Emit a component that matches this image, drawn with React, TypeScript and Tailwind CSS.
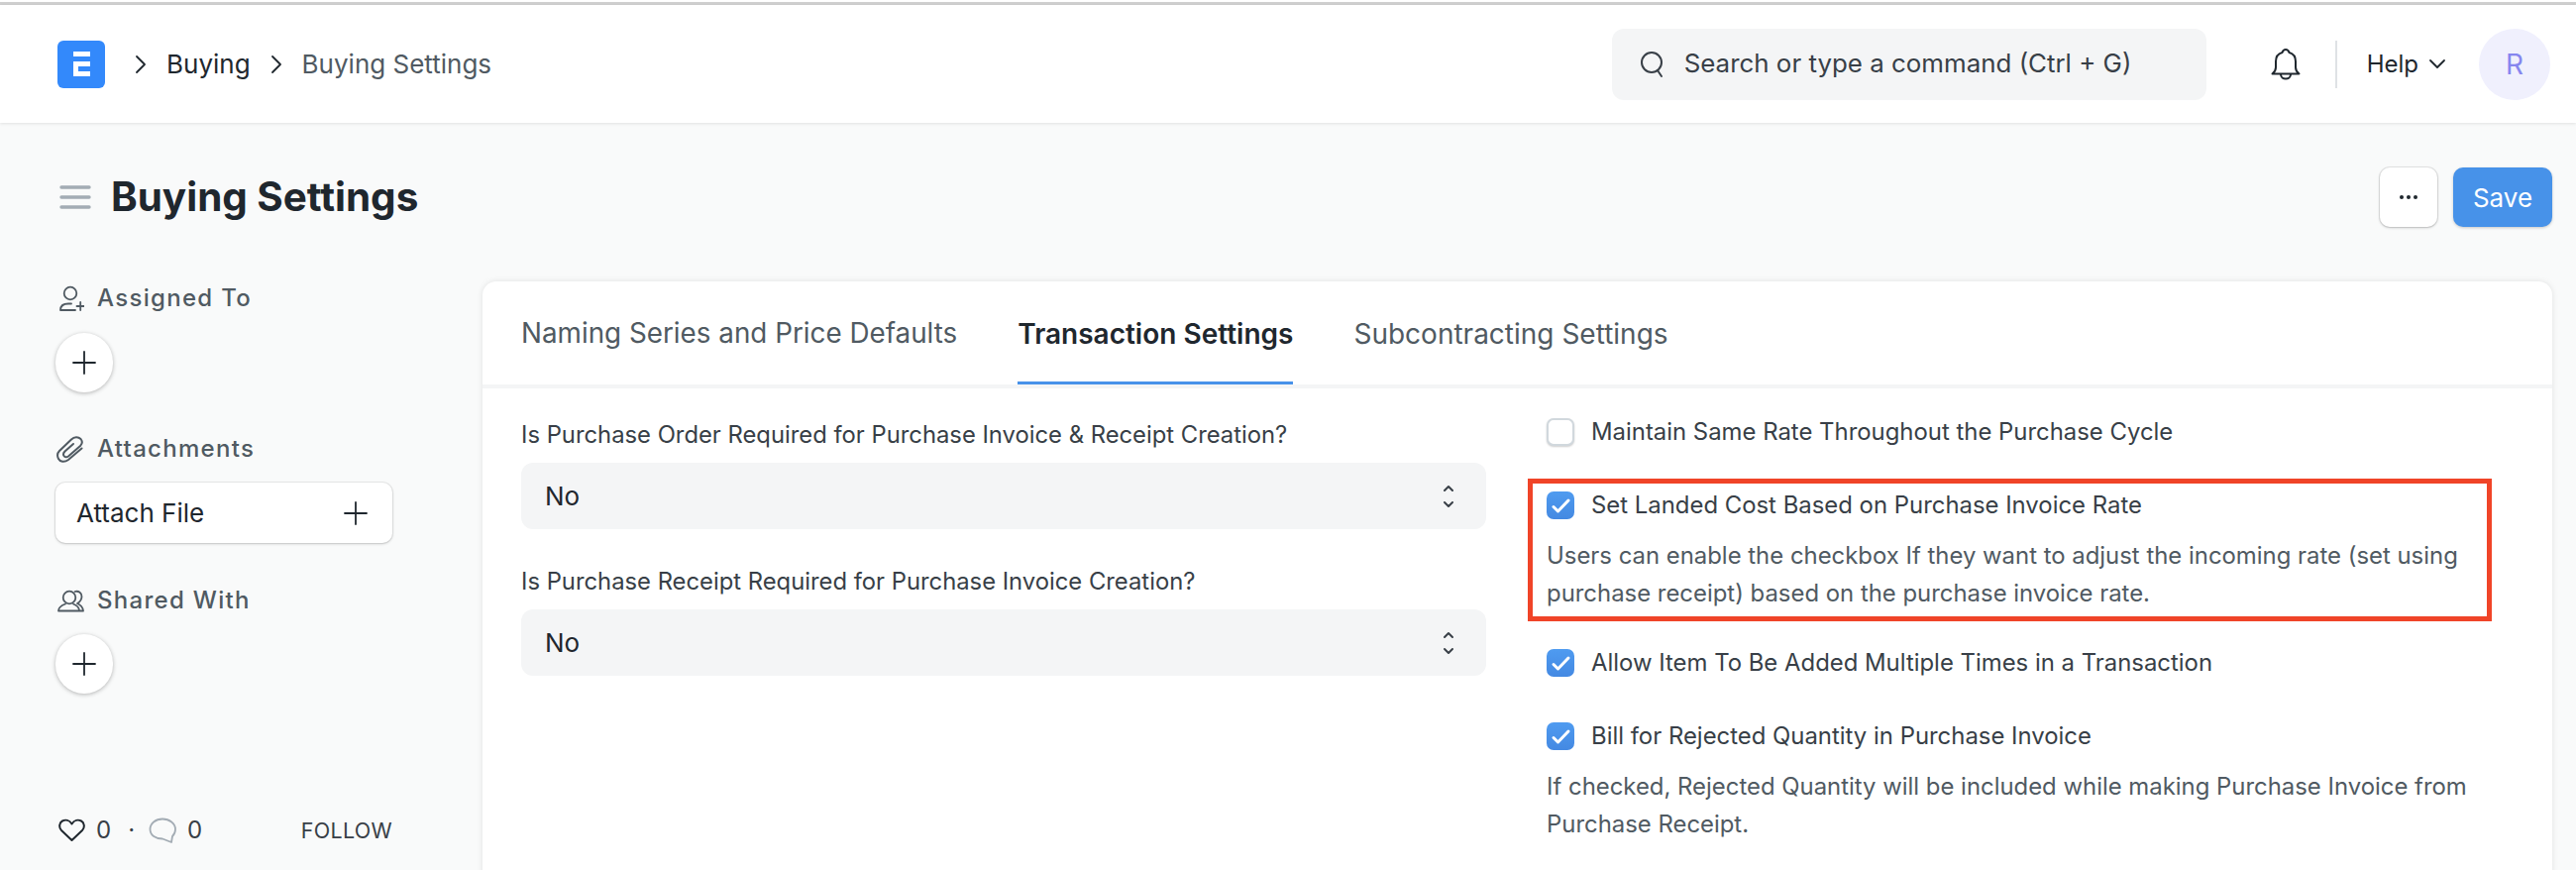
import React from "react";

const Plus = ({ s = 24 }: { s?: number }) => (
  <svg width={s} height={s} viewBox="0 0 24 24" fill="none" stroke="#1f272e" strokeWidth="1.8" strokeLinecap="round">
    <path d="M12 1v22M1 12h22" />
  </svg>
);

const Check = ({ on }: { on: boolean }) =>
  on ? (
    <span className="flex h-[28px] w-[28px] shrink-0 items-center justify-center rounded-[7px] bg-gradient-to-b from-[#4f9bf0] to-[#4489e2]">
      <svg width="28" height="28" viewBox="0 0 28 28" fill="none" stroke="#fff" strokeWidth="3" strokeLinecap="round" strokeLinejoin="round">
        <path d="M7 15.500L11.500 20 22 9" />
      </svg>
    </span>
  ) : (
    <span className="h-[28px] w-[28px] shrink-0 rounded-[7px] border-2 border-[#d1d8dd] bg-white shadow-[0_1px_2px_rgba(0,0,0,0.2)]" />
  );

const CheckRow = ({ on, label }: { on: boolean; label: string }) => (
  <div className="flex h-[28px] items-center gap-[17px] text-[23.900px] text-[#383f47]">
    <Check on={on} />
    <span>{label}</span>
  </div>
);

const Select = () => (
  <div className="flex h-[67px] items-center justify-between rounded-[12px] bg-[#f4f5f6] pl-[24px] pr-[30px] text-[26px] text-[#1f272e]">
    <span>No</span>
    <svg width="16" height="28" viewBox="0 0 16 28" fill="none" stroke="#383f47" strokeWidth="2" strokeLinecap="round" strokeLinejoin="round">
      <path d="M4 8l4-4 4 4M4 20l4 4 4-4" />
    </svg>
  </div>
);

const SideLabel = ({ icon, children }: { icon: React.ReactNode; children: React.ReactNode }) => (
  <div className="flex h-[30px] items-center gap-[13px] text-[24px] font-medium tracking-[1.300px] text-[#505a62]">
    <span className="flex w-[29px] justify-center">{icon}</span>
    {children}
  </div>
);

const Round = () => (
  <div className="flex h-[60px] w-[58px] items-center justify-center rounded-full bg-white shadow-[0_1px_4px_rgba(0,0,0,0.28)]">
    <Plus />
  </div>
);

export default function App() {
  return (
    <div className="h-[878px] w-[2600px] overflow-hidden bg-[#f9fafa] font-['Inter',sans-serif]">
      <div className="h-[2px] bg-white" />
      <div className="h-[3px] bg-[#cfcfcf]" />
      <header className="flex h-[119px] items-center bg-white pl-[58px] pr-[26px] shadow-[0_1px_3px_rgba(0,0,0,0.1)]">
        <div className="flex h-[48px] w-[48px] items-center justify-center rounded-[6px] bg-[#3389fb]">
          <svg width="17" height="25" viewBox="0 0 17 25" fill="#fff">
            <path d="M0 0h17v5H0zM0 10h17v5H5v5h12v5H0z" />
          </svg>
        </div>
        <svg className="ml-[30px]" width="12" height="20" viewBox="0 0 12 20" fill="none" stroke="#1f272e" strokeWidth="1.8" strokeLinecap="round" strokeLinejoin="round">
          <path d="M2 2l8 8-8 8" />
        </svg>
        <span className="ml-[20px] text-[26px] text-[#1f272e]">Buying</span>
        <svg className="ml-[20px]" width="12" height="20" viewBox="0 0 12 20" fill="none" stroke="#1f272e" strokeWidth="1.8" strokeLinecap="round" strokeLinejoin="round">
          <path d="M2 2l8 8-8 8" />
        </svg>
        <span className="ml-[20px] text-[26px] text-[#505a62]">Buying Settings</span>
        <div className="ml-auto flex h-[72px] w-[600px] items-center gap-[19px] rounded-[12px] bg-[#f4f5f6] pl-[28px] text-[25.900px] text-[#383f47]">
          <svg width="26" height="28" viewBox="0 0 26 28" fill="none" stroke="#383f47" strokeWidth="2" strokeLinecap="round">
            <circle cx="12" cy="12" r="10" />
            <path d="M18 20l4 6" />
          </svg>
          <span>Search or type a command (Ctrl + G)</span>
        </div>
        <svg className="ml-[65px]" width="30" height="34" viewBox="0 0 30 34" fill="none" stroke="#1f272e" strokeWidth="2" strokeLinejoin="round">
          <path d="M1.500 26.500C4 24.500 5 23 5 20V14C5 9 8 6 11.500 5 12 3.500 13 2 15 2 17 2 18 3.500 18.500 5 22 6 25 9 25 14V20C25 23 26 24.500 28.500 26.500H1.500Z" />
          <path d="M10 27C10 33 20 33 20 27" />
        </svg>
        <div className="ml-[35px] h-[48px] w-[2px] bg-[#dfe2e5]" />
        <span className="ml-[30px] text-[24px] text-[#1f272e]">Help</span>
        <svg className="ml-[10px]" width="18" height="12" viewBox="0 0 18 12" fill="none" stroke="#1f272e" strokeWidth="1.8" strokeLinecap="round" strokeLinejoin="round">
          <path d="M2 2l7 7 7-7" />
        </svg>
        <div className="ml-[33px] flex h-[72px] w-[72px] items-center justify-center rounded-full bg-[#f0f0fd] text-[28px] text-[#8686ef]">R</div>
      </header>

      <div className="flex h-[160px] items-center pb-[10px] pl-[60px] pr-[24px]">
        <svg width="32" height="28" viewBox="0 0 32 28" fill="none" stroke="#a3acb4" strokeWidth="3.400" strokeLinecap="round">
          <path d="M2 4h28M2 14h28M2 24h28" />
        </svg>
        <h1 className="ml-[20px] text-[40.400px] font-bold text-[#1f272e]">Buying Settings</h1>
        <div className="ml-auto flex h-[60px] w-[58px] items-center justify-center rounded-[10px] bg-white text-[#1f272e] shadow-[0_0_0_1px_rgba(0,0,0,0.08),0_1px_3px_rgba(0,0,0,0.2)]">
          <svg width="20" height="6" viewBox="0 0 20 6" fill="#1f272e">
            <circle cx="3" cy="3" r="2" />
            <circle cx="10" cy="3" r="2" />
            <circle cx="17" cy="3" r="2" />
          </svg>
        </div>
        <div className="ml-[16px] flex h-[60px] w-[100px] items-center justify-center rounded-[10px] bg-[#4792e9] text-[26px] text-white shadow-[0_1px_3px_rgba(0,0,0,0.2)]">Save</div>
      </div>

      <div className="flex pl-[56px]">
        <aside className="flex h-[594px] w-[431px] shrink-0 flex-col pt-[2px]">
          <SideLabel icon={
            <svg width="28" height="26" viewBox="0 0 28 26" fill="none" stroke="#505a62" strokeWidth="1.800" strokeLinecap="round">
              <circle cx="14" cy="8" r="6.300" />
              <path d="M4 25c0-4 3-6.500 8-6.500h3M4 25h15M20.500 21h7.500M24.200 17v8" />
            </svg>
          }>Assigned To</SideLabel>
          <div className="mt-[20px]"><Round /></div>
          <div className="mt-[42px]">
            <SideLabel icon={
              <svg width="27" height="27" viewBox="0 0 27 27" fill="none" stroke="#505a62" strokeWidth="2" strokeLinecap="round">
                <path d="M25.500 12.500L12 24C8 27 3.500 26 2 23 .5 20 1 17 3 15L15 3.500C18 .5 22 .5 24.500 3 26.500 5.500 26 8 24 10L12 20.500C10.500 21.500 8.500 21.500 7.500 20 6.500 18.500 7 17 8.500 15.500L17 8" />
              </svg>
            }>Attachments</SideLabel>
          </div>
          <div className="mt-[19px] flex h-[61px] w-[340px] items-center justify-between rounded-[10px] bg-white pl-[21px] pr-[25px] text-[26px] text-[#1f272e] shadow-[0_0_0_1px_rgba(0,0,0,0.06),0_1px_3px_rgba(0,0,0,0.18)]">
            <span>Attach File</span>
            <Plus />
          </div>
          <div className="mt-[43px]">
            <SideLabel icon={
              <svg width="29" height="24" viewBox="0 0 29 24" fill="none" stroke="#505a62" strokeWidth="1.800" strokeLinecap="round" strokeLinejoin="round">
                <circle cx="14" cy="9" r="6.300" />
                <path d="M10 15.500C6 17 3 19 3 22.500H24C24 19 22 17 18 15.500M19.500 3C23.500 2 26.500 4.500 26.500 8 26.500 11 24.500 13.500 22 15 24.500 16 27.500 18 28 22.500H24" />
              </svg>
            }>Shared With</SideLabel>
          </div>
          <div className="mt-[19px]"><Round /></div>
          <div className="mt-[123px] flex h-[30px] w-[340px] items-center text-[24px] text-[#383f47]">
            <svg className="ml-[3px]" width="27" height="24" viewBox="0 0 27 24" fill="none" stroke="#1f272e" strokeWidth="2" strokeLinejoin="round">
              <path d="M13.500 22L3 12C0 9 1 4 4 2.500s7-1 9.500 3c2.500-4 6.500-4.500 9.500-3S27 9 24 12z" />
            </svg>
            <span className="ml-[11px]">0</span>
            <span className="ml-[17px]">·</span>
            <svg className="ml-[14px]" width="28" height="26" viewBox="0 0 28 26" fill="none" stroke="#a3acb4" strokeWidth="1.800" strokeLinejoin="round">
              <path d="M14 1.500C7 1.500 1.500 6 1.500 12 1.500 18 7 21.500 14 21.500L23 25 24 19C26 17 27 14.500 27 12 27 6 21 1.500 14 1.500Z" />
            </svg>
            <span className="ml-[11px]">0</span>
            <span className="ml-auto text-[21.500px] tracking-[0.300px]">FOLLOW</span>
          </div>
        </aside>

        <main className="h-[700px] w-[2089px] shrink-0 rounded-t-[14px] bg-white shadow-[0_0_6px_rgba(0,0,0,0.1)]">
          <nav className="flex h-[108px] gap-[61px] border-b-[4px] border-[#f4f5f6] pl-[39px] text-[27.800px] text-[#505a62]">
            <span className="pt-[32px]">Naming Series and Price Defaults</span>
            <span className="h-[104px] border-b-[3px] border-[#4792e9] pt-[32px] text-[28px] font-semibold text-[#1f272e]">Transaction Settings</span>
            <span className="pt-[32px] text-[28px]">Subcontracting Settings</span>
          </nav>
          <div className="flex pl-[39px]">
            <div className="w-[974px] shrink-0 pt-[32px] text-[23.800px] text-[#383f47]">
              <div className="flex h-[30px] items-center">Is Purchase Order Required for Purchase Invoice &amp; Receipt Creation?</div>
              <div className="mt-[13px]"><Select /></div>
              <div className="mt-[38px] flex h-[30px] items-center">Is Purchase Receipt Required for Purchase Invoice Creation?</div>
              <div className="mt-[13px]"><Select /></div>
            </div>
            <div className="ml-[61px] flex-1 pt-[30px]">
              <CheckRow on={false} label="Maintain Same Rate Throughout the Purchase Cycle" />
              <div className="relative mt-[46px]">
                <CheckRow on label="Set Landed Cost Based on Purchase Invoice Rate" />
                <p className="mt-[18px] w-[950px] text-[23.900px] leading-[38px] text-[#505a62]">Users can enable the checkbox If they want to adjust the incoming rate (set using purchase receipt) based on the purchase invoice rate.</p>
                <div className="absolute left-[-19px] top-[-13px] h-[144px] w-[973px] border-[5px] border-[#f04428]" />
              </div>
              <div className="mt-[37px]"><CheckRow on label="Allow Item To Be Added Multiple Times in a Transaction" /></div>
              <div className="mt-[46px]"><CheckRow on label="Bill for Rejected Quantity in Purchase Invoice" /></div>
              <p className="mt-[18px] w-[950px] text-[23.900px] leading-[38px] text-[#505a62]">If checked, Rejected Quantity will be included while making Purchase Invoice from Purchase Receipt.</p>
            </div>
          </div>
        </main>
      </div>
    </div>
  );
}
